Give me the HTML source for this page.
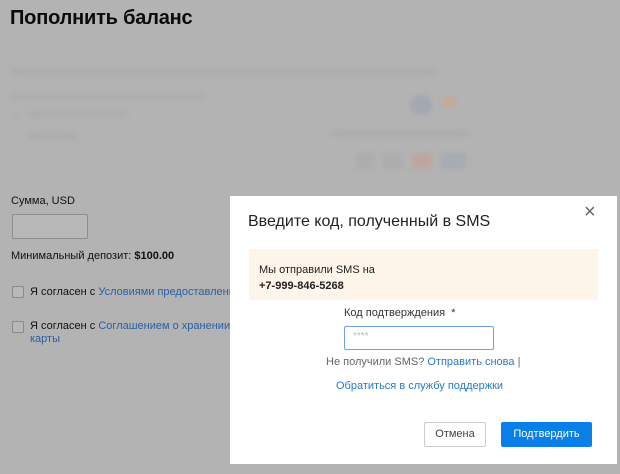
<!DOCTYPE html>
<html><head><meta charset="utf-8"><style>
*{margin:0;padding:0;box-sizing:border-box}
body{width:620px;height:474px;background:#b3b3b3;font-family:"Liberation Sans",sans-serif;position:relative;overflow:hidden;color:#111}
.a{position:absolute;white-space:nowrap}
.blur{position:absolute;background:#adadad;filter:blur(2px);border-radius:3px}
.cb{position:absolute;width:12px;height:12px;border:1px solid #8a8a8a;border-radius:2px;background:#b8b8b8}
.lnk{color:#2a5ea8}
.modal{position:absolute;left:230px;top:196px;width:387px;height:268px;background:#fff}
</style></head><body>
<div class="a" style="left:10px;top:7px;font-size:20px;font-weight:bold;color:#0a0a0a;letter-spacing:-0.2px">Пополнить баланс</div>
<div class="blur" style="left:10px;top:68px;width:425px;height:7px"></div>
<div class="blur" style="left:10px;top:94px;width:195px;height:6px"></div>
<div class="blur" style="left:12px;top:111px;width:6px;height:8px;background:#a6b0bc"></div>
<div class="blur" style="left:28px;top:111px;width:100px;height:6px"></div>
<div class="blur" style="left:28px;top:133px;width:50px;height:7px"></div>
<div class="blur" style="left:410px;top:95px;width:22px;height:20px;border-radius:50%;background:#a3a7b0"></div>
<div class="blur" style="left:442px;top:95px;width:14px;height:14px;border-radius:50%;background:#c2ab98"></div>
<div class="blur" style="left:330px;top:130px;width:140px;height:6px"></div>
<div class="blur" style="left:355px;top:153px;width:20px;height:16px"></div>
<div class="blur" style="left:383px;top:153px;width:20px;height:16px"></div>
<div class="blur" style="left:412px;top:153px;width:20px;height:16px;background:#bea69e"></div>
<div class="blur" style="left:440px;top:153px;width:26px;height:16px;background:#a8aab4"></div>
<div class="a" style="left:11px;top:195px;font-size:11px">Сумма, USD</div>
<div class="a" style="left:12px;top:214px;width:76px;height:25px;border:1px solid #8e8e8e;border-radius:2px;background:#b8b8b8"></div>
<div class="a" style="left:11px;top:250px;font-size:11px">Минимальный депозит: <b>$100.00</b></div>
<div class="cb" style="left:12px;top:286px"></div>
<div class="a" style="left:30px;top:286px;font-size:11px">Я согласен с <span class="lnk">Условиями предоставления</span></div>
<div class="cb" style="left:12px;top:321px"></div>
<div class="a" style="left:30px;top:320px;font-size:11px;line-height:13px">Я согласен с <span class="lnk">Соглашением о хранении у</span><br><span class="lnk">карты</span></div>
<div class="modal">
<div class="a" style="left:18px;top:17px;font-size:16px;color:#222">Введите код, полученный в SMS</div>
<div class="a" style="left:354px;top:5px;font-size:20px;color:#666">×</div>
<div class="a" style="left:19px;top:53px;width:349px;height:51px;background:#fdf5e9"></div>
<div class="a" style="left:29px;top:66px;font-size:11px;line-height:16px;color:#222">Мы отправили SMS на<br><b>+7-999-846-5268</b></div>
<div class="a" style="left:114px;top:111px;font-size:11px;color:#333">Код подтверждения &nbsp;*</div>
<div class="a" style="left:114px;top:130px;width:150px;height:24px;border:1px solid #6fa1dd;border-radius:2px;padding:4px 8px;font-size:10px;color:#bbb">****</div>
<div class="a" style="left:96px;top:160px;font-size:11px;color:#666">Не получили SMS? <span style="color:#2a7ac4">Отправить снова</span> |</div>
<div class="a" style="left:106px;top:184px;font-size:11px;color:#2a7ac4">Обратиться в службу поддержки</div>
<div class="a" style="left:194px;top:226px;width:62px;height:25px;border:1px solid #ccc;border-radius:2px;font-size:11px;color:#444;text-align:center;line-height:23px">Отмена</div>
<div class="a" style="left:271px;top:226px;width:91px;height:25px;background:#0b7fe8;border-radius:2px;font-size:11px;color:#fff;text-align:center;line-height:25px">Подтвердить</div>
</div>
</body></html>
